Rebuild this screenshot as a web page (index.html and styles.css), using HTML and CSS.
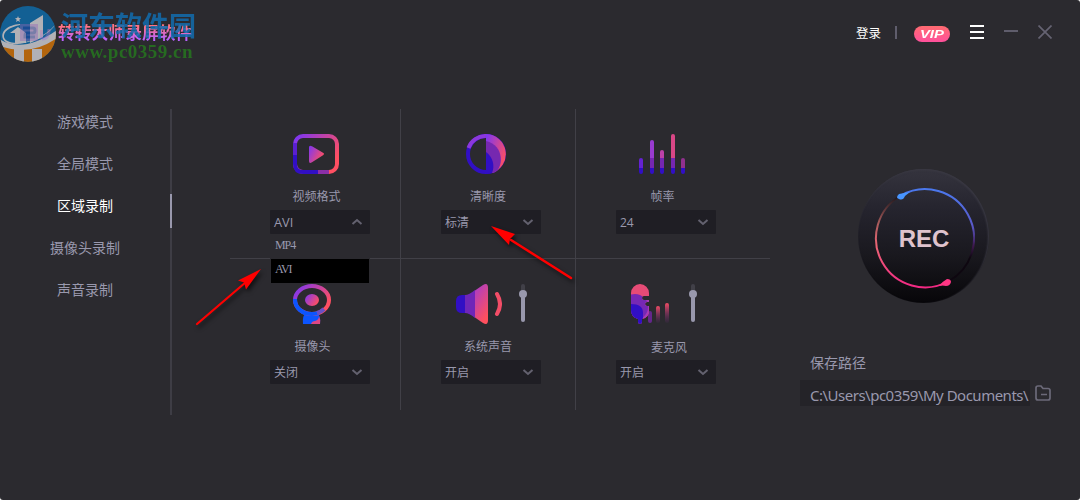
FILE: index.html
```
<!DOCTYPE html>
<html lang="zh-CN">
<head>
    <meta charset="UTF-8">
    <title>转转大师录屏软件</title>
    <link rel="stylesheet" href="styles.css">
</head>
<body>
<div class="app">
    <header class="topbar">
        <div class="brand">
            <svg class="brand-mark" width="30" height="18" viewBox="0 0 30 18"></svg>
            <span class="brand-name">转转大师录屏软件</span>
        </div>
        <nav class="actions">
            <span class="login">登录</span>
            <span class="divider"></span>
            <span class="vip"><b>VIP</b></span>
            <svg class="menu" width="14" height="14"><path d="M0 1h14M0 7h14M0 13h14" stroke="#fff" stroke-width="2"/></svg>
            <svg class="minimize" width="14" height="14"><path d="M0 6h14" stroke="#5f5d6c" stroke-width="2"/></svg>
            <svg class="close" width="14" height="14"><path d="M.5.5l13 13M13.500.5l-13 13" stroke="#656372" stroke-width="1.7"/></svg>
        </nav>
    </header>

    <main class="content">
        <aside class="modes">
            <a>游戏模式</a>
            <a>全局模式</a>
            <a class="active">区域录制</a>
            <a>摄像头录制</a>
            <a>声音录制</a>
        </aside>

        <section class="settings">
            <div class="card format">
                <div class="icon">
                    <svg width="46" height="40" viewBox="0 0 46 40">
                        <defs>
                            <linearGradient id="warm" x1="0" y1="0" x2="1" y2=".6">
                                <stop offset="0" stop-color="#7b35f5"/>
                                <stop offset="1" stop-color="#ff4f62"/>
                            </linearGradient>
                        </defs>
                        <rect x="2" y="2" width="42" height="36" rx="8" fill="none" stroke="url(#warm)" stroke-width="4"/>
                        <path d="M2 9v12" stroke="#5a20d0" stroke-width="4"/>
                        <path d="M2 21v9q0 8 8 8h15" fill="none" stroke="#310fc4" stroke-width="4"/>
                        <path d="M25 38h11" stroke="#8b2fa8" stroke-width="4"/>
                        <path d="M16 13.500q0-3 3-1.200l11 6.500q2 1.200 0 2.400l-11 7q-3 1.800-3-1.200z" fill="url(#warm)"/>
                    </svg>
                </div>
                <div class="label">视频格式</div>
                <div class="select">AVI<svg width="12" height="8"><path d="M1.500 6L6 2l4.500 4" /></svg></div>
                <ul class="options">
                    <li>MP4</li>
                    <li class="selected">AVI</li>
                </ul>
            </div>

            <div class="card clarity">
                <div class="icon">
                    <svg width="40" height="40" viewBox="0 0 40 40">
                        <circle cx="20" cy="20" r="18" fill="none" stroke="#310fc4" stroke-width="4"/>
                        <path d="M2.500 14A18 18 0 0 1 20 2" fill="none" stroke="#8b38dc" stroke-width="4"/>
                        <path d="M20 0a20 20 0 0 1 6 39L20 36z" fill="url(#warm)"/>
                        <path d="M20 7c19 4 18 29 7 32l-7-1z" fill="#7628b0"/>
                        <path d="M20 18c7 5 9 14 6 21l-6 1z" fill="#310fc4"/>
                    </svg>
                </div>
                <div class="label">清晰度</div>
                <div class="select">标清<svg width="12" height="8"><path d="M1.500 2L6 6l4.500-4" /></svg></div>
            </div>

            <div class="card fps">
                <div class="icon">
                    <svg width="46" height="40" viewBox="0 0 46 40">
                        <g fill="none" stroke-width="4">
                            <path d="M2 26v10" stroke="#6522d2" stroke-linecap="round"/>
                            <path d="M13 8v20" stroke="#983bd0" stroke-linecap="round"/>
                            <path d="M23 18v10" stroke="#bd41a8" stroke-linecap="round"/>
                            <path d="M34 2v26" stroke="#d94786" stroke-linecap="round"/>
                            <path d="M44 26v10" stroke="#91308e" stroke-linecap="round"/>
                            <path d="M13 24v11M23 24v11M34 24v11" stroke="#7527b1"/>
                            <path d="M2 34v4M13 34v4M23 34v4M34 34v4M44 34v4" stroke="#310fc4"/>
                            <path d="M2 36v2M13 36v2M23 36v2M34 36v2M44 36v2" stroke="#310fc4" stroke-linecap="round"/>
                        </g>
                    </svg>
                </div>
                <div class="label">帧率</div>
                <div class="select">24<svg width="12" height="8"><path d="M1.500 2L6 6l4.500-4" /></svg></div>
            </div>

            <div class="card camera">
                <div class="icon">
                    <svg width="38" height="40" viewBox="0 0 38 40">
                        <path d="M13 28q-4 4-3 12h17q1-8-3-12z" fill="#0c55ff"/>
                        <path d="M18 40q1-3 4-3 4-1 4-5 2 4 1 8z" fill="#dc4784"/>
                        <ellipse cx="19" cy="16" rx="17" ry="14" fill="#2b2a2f" stroke="url(#warm)" stroke-width="4"/>
                        <path d="M2 15c0 9 7 15 17 15q4 0 7-1.500" fill="none" stroke="#0c55ff" stroke-width="4"/>
                        <path d="M24 29q4-1 7-4" fill="none" stroke="#6a50c5" stroke-width="4"/>
                        <ellipse cx="19" cy="16" rx="7" ry="6" fill="url(#warm)"/>
                    </svg>
                </div>
                <div class="label">摄像头</div>
                <div class="select">关闭<svg width="12" height="8"><path d="M1.500 2L6 6l4.500-4" /></svg></div>
            </div>

            <div class="card sound">
                <div class="icon">
                    <svg width="46" height="40" viewBox="0 0 46 40">
                        <defs>
                            <linearGradient id="horn" x1="0" y1="0" x2=".5" y2="1">
                                <stop offset="0" stop-color="#a63bce"/>
                                <stop offset="1" stop-color="#ff505e"/>
                            </linearGradient>
                        </defs>
                        <path d="M19 6.500L27 1q5-3 5 3v32q0 6-5 3l-8-5.500z" fill="url(#horn)"/>
                        <path d="M9 11q4 0 10-5v28q-6-5-10-5z" fill="#7026b8"/>
                        <path d="M9 11H6q-6 0-6 6v6q0 6 6 6h3z" fill="#310fc4"/>
                        <path d="M41 10q6 10 0 20" fill="none" stroke="#f34d67" stroke-width="4" stroke-linecap="round"/>
                    </svg>
                    <svg class="volume" width="8" height="40" viewBox="0 0 8 40">
                        <path d="M4 2v10" stroke="#414048" stroke-width="4" stroke-linecap="round"/>
                        <path d="M4 10v26" stroke="#9998ad" stroke-width="4" stroke-linecap="round"/>
                        <circle cx="4" cy="10" r="4" fill="#9998ad"/>
                    </svg>
                </div>
                <div class="label">系统声音</div>
                <div class="select">开启<svg width="12" height="8"><path d="M1.500 2L6 6l4.500-4" /></svg></div>
            </div>

            <div class="card mic">
                <div class="icon">
                    <svg width="39" height="40" viewBox="0 0 39 40">
                        <defs>
                            <linearGradient id="level" x1="0" y1="0" x2="0" y2="1">
                                <stop offset="0" stop-color="#f44c63"/>
                                <stop offset="1" stop-color="#6c2880" stop-opacity=".1"/>
                            </linearGradient>
                            <clipPath id="micShape">
                                <path d="M0 9a9 9 0 0 1 18 0v3h-5q-2 0-2 2t2 2h5v2h-2q-2 0-2 2t2 2h2v4q0 8-7 9v3q0 2-2 2t-2-2v-3Q0 33 0 26z"/>
                            </clipPath>
                        </defs>
                        <rect x="17" y="27" width="4" height="12" rx="2" fill="#64268c"/>
                        <rect x="25" y="22" width="4" height="17" rx="2" fill="url(#level)"/>
                        <rect x="34" y="19" width="4" height="20" rx="2" fill="url(#level)"/>
                        <g clip-path="url(#micShape)">
                            <rect width="18" height="40" fill="#e64b76"/>
                            <path d="M12 16h6v22h-6z" fill="#a839b7"/>
                            <circle cx="4" cy="23" r="13" fill="#7628b4"/>
                            <path d="M0 20q12 0 12 9v11H0z" fill="#310fc4"/>
                        </g>
                    </svg>
                    <svg class="volume" width="8" height="40" viewBox="0 0 8 40">
                        <path d="M4 2v10" stroke="#414048" stroke-width="4" stroke-linecap="round"/>
                        <path d="M4 10v26" stroke="#9998ad" stroke-width="4" stroke-linecap="round"/>
                        <circle cx="4" cy="10" r="4" fill="#9998ad"/>
                    </svg>
                </div>
                <div class="label">麦克风</div>
                <div class="select">开启<svg width="12" height="8"><path d="M1.500 2L6 6l4.500-4" /></svg></div>
            </div>
        </section>

        <section class="record">
            <button class="rec">
                <svg class="ring" width="102" height="102" viewBox="0 0 102 102">
                    <defs>
                        <linearGradient id="ringBlue" x1="0" y1="0" x2="0" y2="1">
                            <stop offset="0" stop-color="#4b78ed"/>
                            <stop offset=".4" stop-color="#5a59ca"/>
                            <stop offset=".62" stop-color="#3d174c"/>
                            <stop offset=".75" stop-color="#0e0710"/>
                        </linearGradient>
                        <linearGradient id="ringPink" x1="0" y1="0" x2="0" y2="1">
                            <stop offset="0" stop-color="#181318"/>
                            <stop offset=".3" stop-color="#a75b5b"/>
                            <stop offset=".55" stop-color="#ed6575"/>
                            <stop offset="1" stop-color="#f32884"/>
                        </linearGradient>
                    </defs>
                    <g fill="none" stroke-width="2">
                        <path d="M28 7.500A49 49 0 0 1 76 93" stroke="url(#ringBlue)"/>
                        <path d="M28 7.500A49 49 0 0 0 76 93" stroke="url(#ringPink)"/>
                    </g>
                    <path d="M37 4Q31 5 26 6q-4 4 0 5 4 2 6-3z" fill="#4895ff"/>
                    <path d="M66 98q4-5 8-7 4 0 4 3-1 4-5 4-4-1-7 0z" fill="#ff3684"/>
                </svg>
                <span>REC</span>
            </button>
            <div class="path-label">保存路径</div>
            <div class="path-row">
                <div class="path">C:\Users\pc0359\My Documents\</div>
                <svg width="16" height="16" viewBox="0 0 16 16" fill="none" stroke="#6c6a79" stroke-width="1.700"><path d="M1 3q0-2 2-2h3l2 2.500h5q2 0 2 2V13q0 2-2 2H3q-2 0-2-2zM6 9.500h6"/></svg>
            </div>
        </section>
    </main>

    <div class="watermark">
        <svg width="56" height="56" viewBox="0 0 56 56">
            <defs>
                <clipPath id="badge"><circle cx="28" cy="28" r="28"/></clipPath>
                <linearGradient id="brandFill" x1="0" y1="0" x2="0" y2="1">
                    <stop offset="0" stop-color="#e884b8"/>
                    <stop offset="1" stop-color="#a979ff"/>
                </linearGradient>
            </defs>
            <g clip-path="url(#badge)">
                <path d="M0 0h56v56H0z" fill="#0f6aa6"/>
                <path d="M0 39q30 10 56-10v27H0z" fill="#cb7008"/>
                <path d="M14 43h10v13H14zM32 43h10v13H32z" fill="#c9c9ce"/>
                <path d="M10 27l8-6 8 6v10H15V27zM30 17l13-8v22l-13 6z" fill="#c9c9ce"/>
                <path d="M18 10l.8 2 2.200.2-1.700 1.500.6 2.300-1.900-1.200-1.900 1.200.6-2.300-1.700-1.500 2.200-.2z" fill="#c9c9ce"/>
                <path d="M20 19Q3 23 4 31c2 10 34 8 51-12-9 15-46 26-52 14-3-8 5-14 17-15z" fill="#c9c9ce"/>
                <path d="M-1 33q24 15 58-9v8q-26 18-54 9z" fill="#c9c9ce"/>
            </g>
            <g opacity=".4">
                <path d="M20 18h18v17H20z" fill="#a86fd0"/>
                <path d="M23 22h10q2 0 2 2.500T33 27h-6q-2 0-2 2.500V31h10" fill="none" stroke="#2432a8" stroke-width="3"/>
                <path d="M41.500 33V24M42 33q7 0 7-10" fill="none" stroke="url(#brandFill)" stroke-width="3"/>
            </g>
        </svg>
        <div>
            <div class="site-name">河东软件园</div>
            <div class="site-url">www.pc0359.cn</div>
        </div>
    </div>

    <svg class="arrows" width="1080" height="500">
        <path d="M197 324L246 282" stroke="#f00" stroke-width="2.200" stroke-linecap="round"/>
        <path d="M261 269L238 280.500l6 2 2 7z" fill="#f00"/>
        <path d="M571 278L511 240" stroke="#f00" stroke-width="2.500" stroke-linecap="round"/>
        <path d="M491 226l24 8-5 5-1 6z" fill="#f00"/>
    </svg>
</div>
</body>
</html>
```
FILE: styles.css
```
* {
    box-sizing: border-box;
}
body {
    margin: 0;
    background: #fff;
    font-family: "Open Sans", "Noto Sans CJK SC", sans-serif;
    font-size: 12px;
    color: #9998ad;
}
svg {
    display: block;
    flex-shrink: 0;
}
.app {
    position: relative;
    width: 1080px;
    height: 500px;
    overflow: hidden;
    border-radius: 3px;
    background: #2b2a2f;
}

/* top bar */
.topbar {
    display: flex;
    justify-content: space-between;
    height: 109px;
    padding: 20px 28px 0 20px;
}
.brand {
    display: flex;
    align-items: center;
    gap: 8px;
    height: 26px;
}
.brand-name {
    font-size: 16.8px;
    font-weight: bold;
    line-height: 26px;
    background: linear-gradient(#ff7384 25%, #ba62ff 75%);
    -webkit-background-clip: text;
    background-clip: text;
    color: transparent;
}
.actions {
    display: flex;
    align-items: center;
    height: 24px;
}
.login {
    font-size: 12.5px;
    color: #fff;
}
.divider {
    width: 2px;
    height: 13px;
    margin: 0 17px 0 14px;
    background: #5f5d6c;
}
.vip {
    width: 36px;
    height: 16px;
    margin-top: 4px;
    border-radius: 8px;
    background: linear-gradient(#ff6b70, #ff509c);
    color: #fff;
    font: italic bold 11px/16px "Liberation Sans", Arial, sans-serif;
    text-align: center;
}
.vip b {
    display: inline-block;
    transform: scaleX(1.35);
}
.menu {
    margin-left: 20px;
}
.minimize {
    margin-left: 20px;
}
.close {
    margin-left: 20px;
}

.content {
    display: flex;
    align-items: flex-start;
}

/* recording modes */
.modes {
    display: flex;
    flex-direction: column;
    width: 172px;
    height: 306px;
    padding-top: 1px;
    border-right: 2px solid #3e3d45;
    font-size: 14px;
    line-height: 24px;
    text-align: center;
}
.modes a {
    height: 34px;
    margin: 0 -2px 8px 0;
    padding-right: 0;
    border-right: 2px solid transparent;
}
.modes .active {
    color: #fff;
    background: linear-gradient(#9998ad, #9998ad) right 0 / 2px 34px no-repeat border-box;
}

/* settings grid */
.settings {
    display: grid;
    grid-template-columns: 170px 175px 195px;
    grid-template-rows: 149px 152px;
    margin-left: 58px;
}
.card {
    position: relative;
    padding: 25px 0 0 40px;
    border-left: 1px solid #414047;
}
.format, .camera {
    border-left: 0;
}
.camera, .sound, .mic {
    border-top: 1px solid #414047;
}
.icon {
    display: flex;
    justify-content: center;
    width: 100px;
    height: 40px;
}
.label {
    width: 100px;
    height: 24px;
    margin-top: 12px;
    line-height: 22px;
    text-align: center;
}
.format .label, .fps .label {
    padding-right: 7px;
}
.format .icon, .fps .icon {
    padding-right: 8px;
}
.clarity .icon {
    padding-right: 10px;
}
.clarity .label, .sound .label {
    padding-right: 6px;
}
.camera .icon {
    padding-right: 16px;
}
.camera .label {
    padding-right: 15px;
}
.sound .icon, .mic .icon {
    justify-content: flex-start;
    padding-left: 15px;
}
.sound .volume {
    margin-left: 17px;
}
.mic .volume {
    margin-left: 19px;
}
.mic .label {
    padding-left: 6px;
    line-height: 24px;
}
.select {
    display: flex;
    align-items: center;
    justify-content: space-between;
    width: 100px;
    height: 24px;
    padding: 0 7px 0 4px;
    background: #1f1e24;
    border-radius: 1px;
}
.format .select {
    font-size: 12.8px;
}
.select path {
    fill: none;
    stroke: #63616f;
    stroke-width: 2;
}
.options {
    position: absolute;
    top: 125px;
    left: 40px;
    z-index: 1;
    width: 100px;
    margin: 0;
    padding: 1px;
    list-style: none;
    background: #2b2a2f;
    font: 12px/21px "Liberation Serif", serif;
    letter-spacing: -1.1px;
}
.options li {
    height: 24px;
    padding-left: 4px;
}
.options .selected {
    background: #000;
}

/* record button and save path */
.record {
    width: 260px;
    margin-left: 30px;
    padding-top: 60px;
}
.rec {
    display: grid;
    place-items: center;
    width: 131px;
    height: 134px;
    margin-left: 58px;
    padding: 5px 0 0 1px;
    border: 0;
    border-radius: 50%;
    background: linear-gradient(#35343e, #25242e 30%, #19181e 65%, #070609);
    box-shadow: inset -1px 1px 2px #3a3943;
    color: #dfc3cd;
    font: bold 24px/28px "Liberation Sans", Arial, sans-serif;
}
.rec svg, .rec span {
    grid-area: 1 / 1;
}
.path-label {
    margin-top: 50px;
    padding-left: 10px;
    font-size: 14px;
    line-height: 20px;
}
.path-row {
    display: flex;
    align-items: center;
    gap: 5px;
    margin-top: 7px;
}
.path {
    width: 230px;
    height: 26px;
    padding: 2px 0 0 10px;
    overflow: hidden;
    background: #242328;
    font-family: "Noto Sans", sans-serif;
    font-size: 15px;
    line-height: 26px;
    letter-spacing: -0.5px;
    white-space: nowrap;
}

/* overlays */
.watermark {
    position: absolute;
    top: 6px;
    left: 0;
    display: flex;
    gap: 5px;
    opacity: 0.85;
}
.site-name {
    height: 34px;
    font: bold 27px/38px "Noto Sans CJK SC", sans-serif;
    color: #126cae;
}
.site-url {
    font: bold 19px/24px "Liberation Serif", serif;
    letter-spacing: 0.5px;
    color: #26761f;
}
.arrows {
    position: absolute;
    top: 0;
    left: 0;
    z-index: 2;
    filter: drop-shadow(2px 3px 2px rgba(0, 0, 0, 0.6));
}
```
